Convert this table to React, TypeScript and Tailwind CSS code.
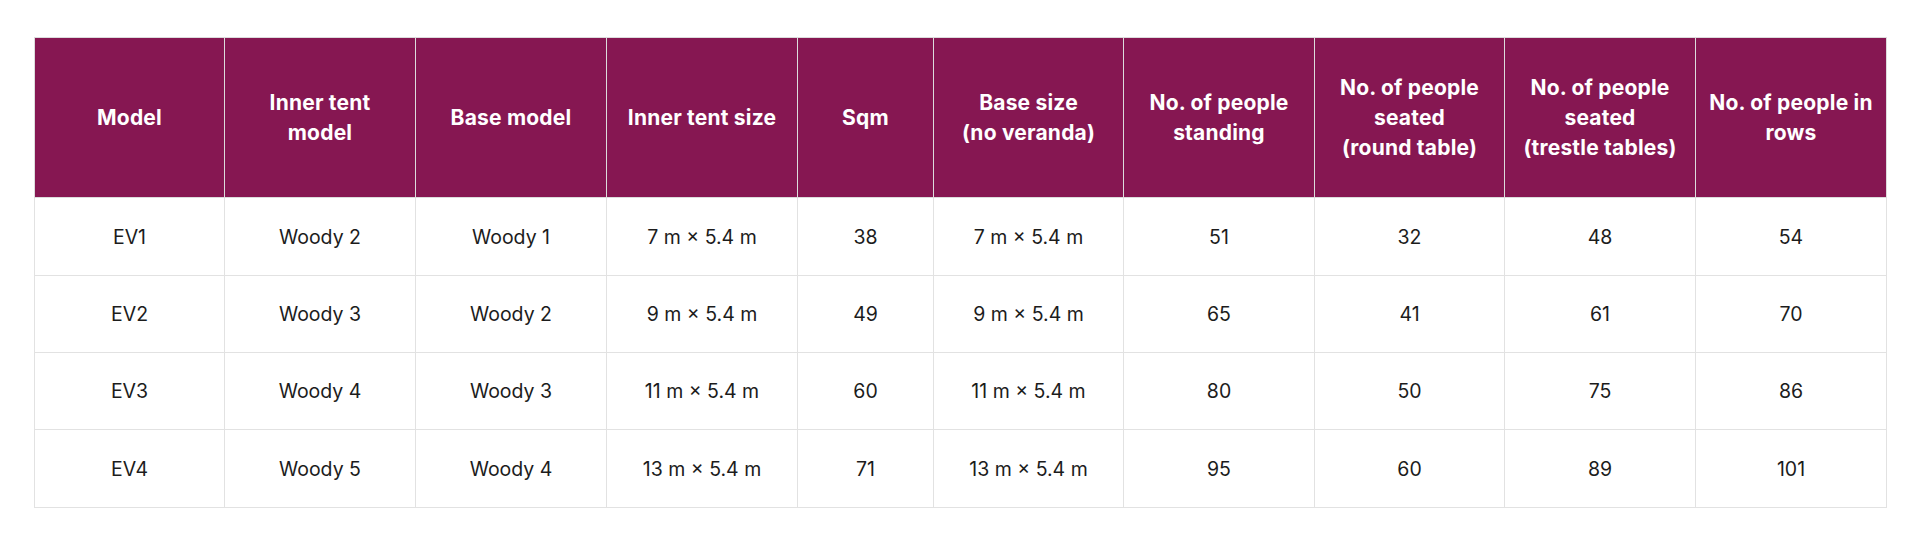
// テント仕様の比較表。列幅は参照画像に合わせて固定する。

const headers = [
  ["Model"],
  ["Inner tent", "model"],
  ["Base model"],
  ["Inner tent size"],
  ["Sqm"],
  ["Base size", "(no veranda)"],
  ["No. of people", "standing"],
  ["No. of people", "seated", "(round table)"],
  ["No. of people", "seated", "(trestle tables)"],
  ["No. of people in", "rows"],
];

const rows = [
  ["EV1", "Woody 2", "Woody 1", "7 m × 5.4 m", "38", "7 m × 5.4 m", "51", "32", "48", "54"],
  ["EV2", "Woody 3", "Woody 2", "9 m × 5.4 m", "49", "9 m × 5.4 m", "65", "41", "61", "70"],
  ["EV3", "Woody 4", "Woody 3", "11 m × 5.4 m", "60", "11 m × 5.4 m", "80", "50", "75", "86"],
  ["EV4", "Woody 5", "Woody 4", "13 m × 5.4 m", "71", "13 m × 5.4 m", "95", "60", "89", "101"],
];

const rowHeights = ["h-[78px]", "h-[77px]", "h-[77px]", "h-[78px]"];

export default function App() {
  return (
    <div className="min-h-[547px] bg-white pl-[34px] pt-[37px] font-['Inter',sans-serif]">
      <table className="w-[1852px] table-fixed border-collapse">
        <colgroup>
          <col className="w-[190px]" />
          <col className="w-[191px]" />
          <col className="w-[191px]" />
          <col className="w-[191px]" />
          <col className="w-[136px]" />
          <col className="w-[190px]" />
          <col className="w-[191px]" />
          <col className="w-[190px]" />
          <col className="w-[191px]" />
          <col className="w-[191px]" />
        </colgroup>
        <thead>
          <tr className="h-[160px] bg-[#861752]">
            {headers.map((lines, i) => (
              <th
                key={i}
                className="border border-[#dcdcdc] px-1 text-center align-middle text-[21px] font-bold leading-[30px] tracking-[0.2px] text-white"
              >
                {lines.map((line) => (
                  <div key={line}>{line}</div>
                ))}
              </th>
            ))}
          </tr>
        </thead>
        <tbody>
          {rows.map((row, r) => (
            <tr key={row[0]} className={rowHeights[r]}>
              {row.map((cell, i) => (
                <td
                  key={i}
                  className="border border-[#e2e2e2] text-center align-middle text-[19.5px] leading-[30px] text-[#1c1c1c]"
                >
                  {cell}
                </td>
              ))}
            </tr>
          ))}
        </tbody>
      </table>
    </div>
  );
}
